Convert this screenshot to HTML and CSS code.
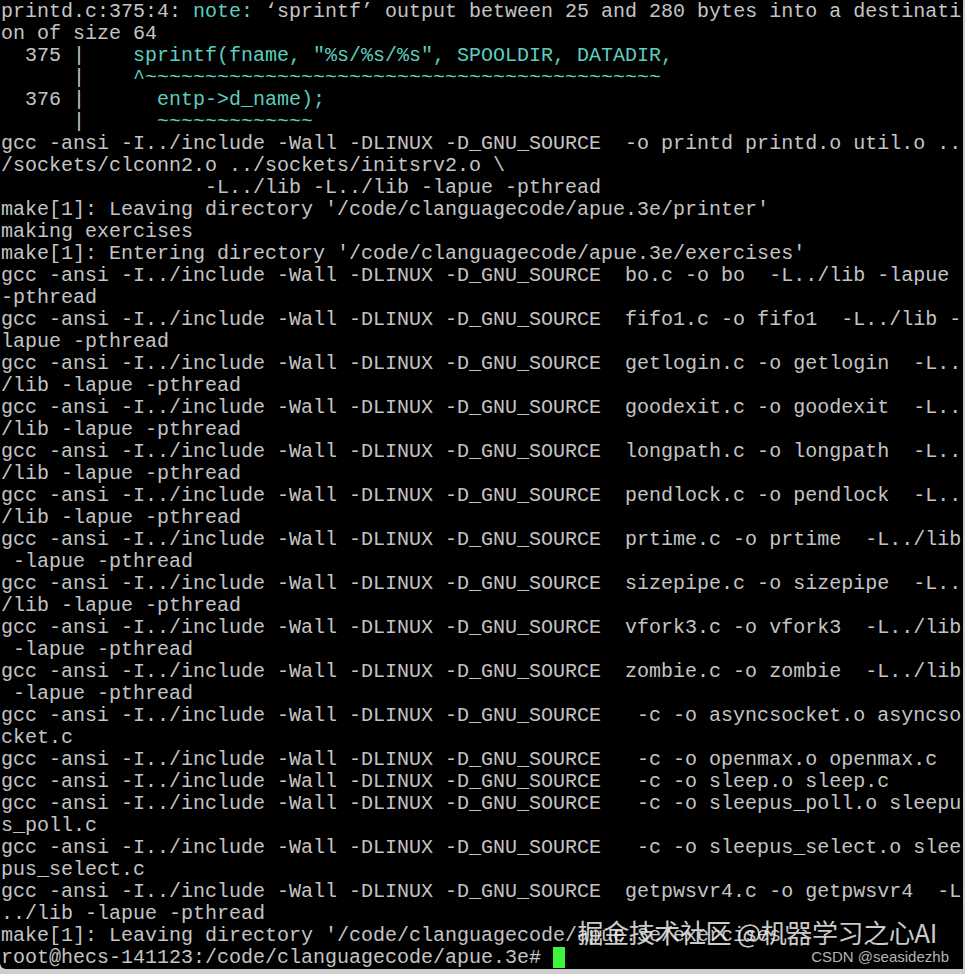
FILE: index.html
```html
<!DOCTYPE html>
<html lang="en">
<head>
<meta charset="utf-8">
<title>terminal</title>
<link rel="stylesheet" href="styles.css">
</head>
<body>
<div class="term">
<pre class="out">printd.c:375:4: <span class="cy">note:</span> ‘sprintf’ output between 25 and 280 bytes into a destinati
on of size 64
  375 |    <span class="cy">sprintf(fname, "%s/%s/%s", SPOOLDIR, DATADIR,</span>
      |    <span class="cy">^~~~~~~~~~~~~~~~~~~~~~~~~~~~~~~~~~~~~~~~~~~~</span>
  376 |      <span class="cy">entp-&gt;d_name);</span>
      |      <span class="cy">~~~~~~~~~~~~~</span>
gcc -ansi -I../include -Wall -DLINUX -D_GNU_SOURCE  -o printd printd.o util.o ..
/sockets/clconn2.o ../sockets/initsrv2.o \
                 -L../lib -L../lib -lapue -pthread
make[1]: Leaving directory '/code/clanguagecode/apue.3e/printer'
making exercises
make[1]: Entering directory '/code/clanguagecode/apue.3e/exercises'
gcc -ansi -I../include -Wall -DLINUX -D_GNU_SOURCE  bo.c -o bo  -L../lib -lapue
-pthread
gcc -ansi -I../include -Wall -DLINUX -D_GNU_SOURCE  fifo1.c -o fifo1  -L../lib -
lapue -pthread
gcc -ansi -I../include -Wall -DLINUX -D_GNU_SOURCE  getlogin.c -o getlogin  -L..
/lib -lapue -pthread
gcc -ansi -I../include -Wall -DLINUX -D_GNU_SOURCE  goodexit.c -o goodexit  -L..
/lib -lapue -pthread
gcc -ansi -I../include -Wall -DLINUX -D_GNU_SOURCE  longpath.c -o longpath  -L..
/lib -lapue -pthread
gcc -ansi -I../include -Wall -DLINUX -D_GNU_SOURCE  pendlock.c -o pendlock  -L..
/lib -lapue -pthread
gcc -ansi -I../include -Wall -DLINUX -D_GNU_SOURCE  prtime.c -o prtime  -L../lib
 -lapue -pthread
gcc -ansi -I../include -Wall -DLINUX -D_GNU_SOURCE  sizepipe.c -o sizepipe  -L..
/lib -lapue -pthread
gcc -ansi -I../include -Wall -DLINUX -D_GNU_SOURCE  vfork3.c -o vfork3  -L../lib
 -lapue -pthread
gcc -ansi -I../include -Wall -DLINUX -D_GNU_SOURCE  zombie.c -o zombie  -L../lib
 -lapue -pthread
gcc -ansi -I../include -Wall -DLINUX -D_GNU_SOURCE   -c -o asyncsocket.o asyncso
cket.c
gcc -ansi -I../include -Wall -DLINUX -D_GNU_SOURCE   -c -o openmax.o openmax.c
gcc -ansi -I../include -Wall -DLINUX -D_GNU_SOURCE   -c -o sleep.o sleep.c
gcc -ansi -I../include -Wall -DLINUX -D_GNU_SOURCE   -c -o sleepus_poll.o sleepu
s_poll.c
gcc -ansi -I../include -Wall -DLINUX -D_GNU_SOURCE   -c -o sleepus_select.o slee
pus_select.c
gcc -ansi -I../include -Wall -DLINUX -D_GNU_SOURCE  getpwsvr4.c -o getpwsvr4  -L
../lib -lapue -pthread
make[1]: Leaving directory '/code/clanguagecode/apue.3e/exercises'
root@hecs-141123:/code/clanguagecode/apue.3e# <span class="cursor"></span></pre>
<div class="wm">
<div class="wm-main">掘金技术社区 @机器学习之心AI</div>
<div class="wm-sub">CSDN @seasidezhb</div>
</div>
</div>
</body>
</html>
```
FILE: styles.css
```css
html, body {
  margin: 0;
  padding: 0;
  background: #cdcdcd;
}
body {
  width: 965px;
  height: 974px;
  overflow: hidden;
}
.term {
  position: relative;
  width: 963px;
  height: 969px;
  background: #000;
  border-bottom-left-radius: 6px;
  overflow: hidden;
}
.out {
  margin: 0;
  padding: 1px 0 0 1px;
  font-family: "Liberation Mono", monospace;
  font-size: 20px;
  line-height: 22px;
  color: #c4c4c4;
  white-space: pre;
}
.cy {
  color: #5ccdbf;
}
.cursor {
  display: inline-block;
  width: 12px;
  height: 21px;
  vertical-align: top;
  background: #3cf53c;
}
.wm {
  position: absolute;
  right: 26px;
  top: 916px;
  display: flex;
  flex-direction: column;
  align-items: flex-end;
  pointer-events: none;
}
.wm-main {
  font-family: "Noto Sans CJK SC", "Liberation Sans", sans-serif;
  font-size: 26px;
  font-weight: 400;
  line-height: 32px;
  color: rgba(232, 232, 232, 0.88);
  letter-spacing: -0.4px;
}
.wm-sub {
  margin-right: -12px;
  font-family: "Liberation Sans", sans-serif;
  font-size: 15px;
  line-height: 18px;
  color: #b4b4b4;
}
```
